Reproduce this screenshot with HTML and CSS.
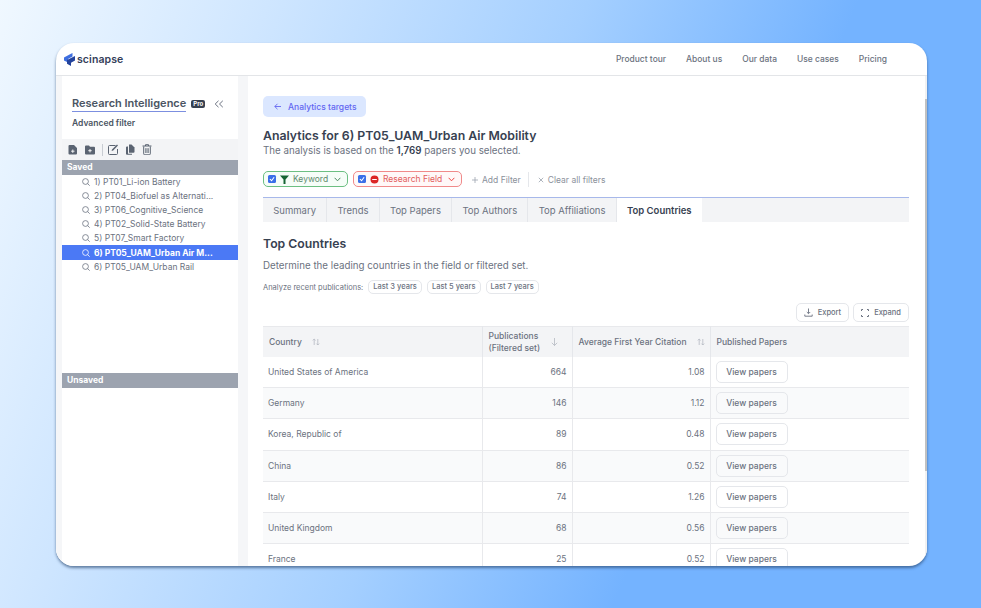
FILE: index.html
```html
<!DOCTYPE html>
<html lang="en">
<head>
<meta charset="utf-8">
<title>Scinapse</title>
<link rel="stylesheet" href="styles.css">
</head>
<body>
<div class="window">
  <header class="topbar">
    <div class="logo">
      <svg class="logo-mark" width="11" height="13" viewBox="0 0 11 13"><path d="M0 4.500 6.500 1 8.500 0V3.600L4 6V9.500L0 7.600Z" fill="#3f6fe0"/><path d="M3 7 11 3V7.500L7 9.700V13L3 10.800Z" fill="#24439c"/></svg>
      <span class="logo-text">scinapse</span>
    </div>
    <nav class="nav">
      <span>Product tour</span><span>About us</span><span>Our data</span><span>Use cases</span><span>Pricing</span>
    </nav>
  </header>
  <div class="body">
    <aside class="side">
      <div class="side-head">
        <div class="side-title-row">
          <span class="side-title">Research Intelligence</span>
          <span class="pro">Pro</span>
          <svg class="collapse" width="10" height="8" viewBox="0 0 10 8"><path d="M4.500 .8 1.200 4l3.300 3.200M8.800 .8 5.500 4l3.300 3.200" fill="none" stroke="#6b7280" stroke-width="1"/></svg>
        </div>
        <div class="adv">Advanced filter</div>
      </div>
      <div class="tools">
        <svg width="10" height="11" viewBox="0 0 10 11"><path d="M1.500 1h4.500L9 4V9.500a1 1 0 0 1-1 1H1.500a1 1 0 0 1-1-1V2a1 1 0 0 1 1-1Z" fill="#5b6472"/><path d="M4.800 5.500v3.400M3.100 7.200h3.400" stroke="#fff" stroke-width=".9"/></svg>
        <svg width="10" height="11" viewBox="0 0 10 11"><path d="M1 1.500h3l1 1.300h4a1 1 0 0 1 1 1V9.500a1 1 0 0 1-1 1H1a1 1 0 0 1-1-1V2.500a1 1 0 0 1 1-1Z" fill="#5b6472"/><path d="M5 5v3.400M3.300 6.700h3.400" stroke="#fff" stroke-width=".9"/></svg>
        <i class="tool-sep"></i>
        <svg width="10" height="11" viewBox="0 0 10 11"><path d="M7.500 1.500H1.500a1 1 0 0 0-1 1v7a1 1 0 0 0 1 1h7a1 1 0 0 0 1-1V5" fill="none" stroke="#5b6472"/><path d="M9 .4 10 1.400 5.200 6.600 3.600 7 4 5.400Z" fill="#5b6472"/></svg>
        <svg width="10" height="11" viewBox="0 0 10 11"><path d="M4 .5H6.500L9.500 3.500V7.800a1 1 0 0 1-1 1H4Z" fill="#5b6472"/><path d="M3 2.500V9.800H7V10.800H2a1 1 0 0 1-1-1V3.500a1 1 0 0 1 1-1Z" fill="#5b6472"/></svg>
        <svg width="10" height="11" viewBox="0 0 10 11"><path d="M.5 2h9M3.500 2V.7h3V2" fill="none" stroke="#5b6472"/><path d="M1.700 2.500v7.300a1 1 0 0 0 1 1h4.600a1 1 0 0 0 1-1V2.500" fill="none" stroke="#5b6472"/><path d="M3.700 4.200v4.800M5 4.200v4.800M6.300 4.200v4.800" stroke="#5b6472" stroke-width=".8"/></svg>
      </div>
      <div class="bar">Saved</div>
      <ul class="list">
        <li><svg class="q" viewBox="0 0 8 8"><circle cx="3.500" cy="3.500" r="2.900" fill="none" stroke="currentColor" stroke-width=".8"/><path d="M5.600 5.600 7.700 7.700" stroke="currentColor" stroke-width=".8"/></svg>1) PT01_Li-ion Battery</li>
        <li><svg class="q" viewBox="0 0 8 8"><circle cx="3.500" cy="3.500" r="2.900" fill="none" stroke="currentColor" stroke-width=".8"/><path d="M5.600 5.600 7.700 7.700" stroke="currentColor" stroke-width=".8"/></svg>2) PT04_Biofuel as Alternati...</li>
        <li><svg class="q" viewBox="0 0 8 8"><circle cx="3.500" cy="3.500" r="2.900" fill="none" stroke="currentColor" stroke-width=".8"/><path d="M5.600 5.600 7.700 7.700" stroke="currentColor" stroke-width=".8"/></svg>3) PT06_Cognitive_Science</li>
        <li><svg class="q" viewBox="0 0 8 8"><circle cx="3.500" cy="3.500" r="2.900" fill="none" stroke="currentColor" stroke-width=".8"/><path d="M5.600 5.600 7.700 7.700" stroke="currentColor" stroke-width=".8"/></svg>4) PT02_Solid-State Battery</li>
        <li><svg class="q" viewBox="0 0 8 8"><circle cx="3.500" cy="3.500" r="2.900" fill="none" stroke="currentColor" stroke-width=".8"/><path d="M5.600 5.600 7.700 7.700" stroke="currentColor" stroke-width=".8"/></svg>5) PT07_Smart Factory</li>
        <li class="sel"><svg class="q" viewBox="0 0 8 8"><circle cx="3.500" cy="3.500" r="2.900" fill="none" stroke="currentColor" stroke-width=".8"/><path d="M5.600 5.600 7.700 7.700" stroke="currentColor" stroke-width=".8"/></svg>6) PT05_UAM_Urban Air M...</li>
        <li><svg class="q" viewBox="0 0 8 8"><circle cx="3.500" cy="3.500" r="2.900" fill="none" stroke="currentColor" stroke-width=".8"/><path d="M5.600 5.600 7.700 7.700" stroke="currentColor" stroke-width=".8"/></svg>6) PT05_UAM_Urban Rail</li>
      </ul>
      <div class="bar">Unsaved</div>
    </aside>
    <main class="main">
      <button class="back"><svg width="7" height="7" viewBox="0 0 7 7"><path d="M3.500.8.800 3.500l2.700 2.700M.8 3.500H7" fill="none" stroke="#6366f1" stroke-width=".9"/></svg>Analytics targets</button>
      <h1 class="title">Analytics for 6) PT05_UAM_Urban Air Mobility</h1>
      <p class="sub">The analysis is based on the <b>1,769</b> papers you selected.</p>
      <div class="filters">
        <span class="chip green">
          <i class="check"><svg width="7" height="7" viewBox="0 0 7 7"><path d="M1 3.500 3 5.500 6 1.500" fill="none" stroke="#fff" stroke-width="1.200"/></svg></i>
          <svg width="9" height="9" viewBox="0 0 9 9"><path d="M0 .5h9L5.500 4.500V9h-2V4.500Z" fill="#166534"/></svg>
          Keyword
          <svg class="caret" width="7" height="5" viewBox="0 0 7 5"><path d="M.6.800 3.500 3.800 6.400.800" fill="none" stroke="#4d8a62"/></svg>
        </span>
        <span class="chip red">
          <i class="check"><svg width="7" height="7" viewBox="0 0 7 7"><path d="M1 3.500 3 5.500 6 1.500" fill="none" stroke="#fff" stroke-width="1.200"/></svg></i>
          <svg width="9" height="9" viewBox="0 0 9 9"><circle cx="4.500" cy="4.500" r="4" fill="#dc2626"/><path d="M2.200 4.500h4.600" stroke="#fff" stroke-width="1.200"/></svg>
          Research Field
          <svg class="caret" width="7" height="5" viewBox="0 0 7 5"><path d="M.6.800 3.500 3.800 6.400.800" fill="none" stroke="#ef4444"/></svg>
        </span>
        <span class="link add"><svg width="6" height="6" viewBox="0 0 6 6"><path d="M3 0v6M0 3h6" stroke="#9ca3af" stroke-width=".8"/></svg>Add Filter</span>
        <span class="link clear"><svg width="6" height="6" viewBox="0 0 6 6"><path d="M.8.800 5.200 5.200M5.200.800.800 5.200" stroke="#9ca3af" stroke-width=".8"/></svg>Clear all filters</span>
      </div>
      <div class="tabs">
        <span>Summary</span><span>Trends</span><span>Top Papers</span><span>Top Authors</span><span>Top Affiliations</span><span class="on">Top Countries</span>
      </div>
      <h2 class="sec">Top Countries</h2>
      <p class="desc">Determine the leading countries in the field or filtered set.</p>
      <div class="recent">
        <span class="recent-label">Analyze recent publications:</span>
        <span class="pill">Last 3 years</span><span class="pill">Last 5 years</span><span class="pill">Last 7 years</span>
      </div>
      <div class="actions">
        <span class="act"><svg width="9" height="9" viewBox="0 0 9 9"><path d="M4.500 .5v5M2.800 4l1.700 1.700L6.200 4M.8 6.500v1.700h7.400V6.500" fill="none" stroke="#6b7280" stroke-width=".9"/></svg>Export</span>
        <span class="act"><svg width="8" height="8" viewBox="0 0 8 8"><path d="M.5 2V.5H2M6 .5h1.500V2M7.500 6v1.500H6M2 7.500H.5V6" fill="none" stroke="#6b7280"/></svg>Expand</span>
      </div>
      <table class="tbl">
        <colgroup><col class="c1"><col class="c2"><col class="c3"><col class="c4"></colgroup>
        <thead>
          <tr>
            <th><div class="th"><span>Country</span><svg class="sort" width="8" height="8" viewBox="0 0 8 8"><path d="M2.200 7V1M.8 2.400 2.200 1l1.400 1.400M5.800 1v6M4.400 5.600 5.800 7l1.400-1.400" fill="none" stroke="#b4b9c2" stroke-width=".8"/></svg></div></th>
            <th><div class="th"><span>Publications<br>(Filtered set)</span><svg class="down" width="7" height="8" viewBox="0 0 7 8"><path d="M3.500 0v7.500M.8 4.800l2.700 2.700 2.700-2.700" fill="none" stroke="#b4b9c2" stroke-width=".8"/></svg></div></th>
            <th><div class="th"><span>Average First Year Citation</span><svg class="sort" width="8" height="8" viewBox="0 0 8 8"><path d="M2.200 7V1M.8 2.400 2.200 1l1.400 1.400M5.800 1v6M4.400 5.600 5.800 7l1.400-1.400" fill="none" stroke="#b4b9c2" stroke-width=".8"/></svg></div></th>
            <th><div class="th"><span>Published Papers</span></div></th>
          </tr>
        </thead>
        <tbody>
          <tr><td>United States of America</td><td class="num">664</td><td class="num">1.08</td><td><span class="view">View papers</span></td></tr>
          <tr><td>Germany</td><td class="num">146</td><td class="num">1.12</td><td><span class="view">View papers</span></td></tr>
          <tr><td>Korea, Republic of</td><td class="num">89</td><td class="num">0.48</td><td><span class="view">View papers</span></td></tr>
          <tr><td>China</td><td class="num">86</td><td class="num">0.52</td><td><span class="view">View papers</span></td></tr>
          <tr><td>Italy</td><td class="num">74</td><td class="num">1.26</td><td><span class="view">View papers</span></td></tr>
          <tr><td>United Kingdom</td><td class="num">68</td><td class="num">0.56</td><td><span class="view">View papers</span></td></tr>
          <tr><td>France</td><td class="num">25</td><td class="num">0.52</td><td><span class="view">View papers</span></td></tr>
        </tbody>
      </table>
    </main>
    <div class="scroll"><i></i></div>
  </div>
</div>
</body>
</html>
```
FILE: styles.css
```css
* { box-sizing: border-box; }
html, body { margin: 0; height: 100%; }
body {
  width: 981px;
  height: 608px;
  padding: 43px 54px 42px 56px;
  overflow: hidden;
  font-family: Inter, "Liberation Sans", sans-serif;
  background: linear-gradient(112deg, #f0f8ff 0%, #cfe6ff 22%, #a4cfff 48%, #74b3ff 70%, #74b3ff 100%);
}
.window {
  height: 523px;
  background: #fff;
  border-radius: 18px;
  overflow: hidden;
  display: flex;
  flex-direction: column;
  box-shadow: 0 2px 3px rgba(40, 70, 110, .65);
}
.topbar {
  height: 33px;
  flex: none;
  display: flex;
  align-items: center;
  justify-content: space-between;
  padding: 0 40px 0 8px;
  border-bottom: 1px solid #e3e5e8;
}
.logo { display: flex; align-items: center; gap: 2px; }
.logo-text { font-size: 10.500px; font-weight: 600; color: #34405a; letter-spacing: .1px; }
.nav { display: flex; gap: 20px; font-size: 8.450px; font-weight: 500; color: #6b7280; }
.body { flex: 1; min-height: 0; display: flex; }
.side {
  width: 182px;
  flex: none;
  margin-left: 0;
  border-left: 6px solid #f5f6f8;
  background: #fff;
  display: flex;
  flex-direction: column;
}
.side-head { height: 63px; padding: 20px 0 0 10px; }
.side-title-row { display: flex; align-items: center; height: 16px; }
.side-title { font-size: 11px; font-weight: 600; color: #4b5563; border-bottom: 1px solid #7c8fe0; line-height: 15px; }
.pro {
  margin-left: 5px;
  font-size: 6px;
  font-weight: 700;
  color: #fff;
  background: #374151;
  border-radius: 2px;
  padding: 1px 2px;
  line-height: 6px;
}
.collapse { margin-left: 9px; }
.adv { margin-top: 5px; font-size: 8.500px; font-weight: 600; color: #4b5563; line-height: 13px; }
.tools {
  height: 21px;
  background: #f3f4f6;
  display: flex;
  align-items: center;
  gap: 7px;
  padding-left: 6px;
}
.tool-sep { width: 1px; height: 12px; background: #c8ccd2; margin-right: -2px; }
.bar {
  height: 15px;
  background: #9ca3af;
  color: #fff;
  font-size: 8.500px;
  font-weight: 700;
  line-height: 15px;
  padding-left: 5px;
  flex: none;
}
.list { list-style: none; margin: 0; padding: 0; height: 198px; }
.list li {
  height: 14.100px;
  display: flex;
  align-items: center;
  padding-left: 20px;
  font-size: 8.500px;
  color: #6b7280;
  white-space: nowrap;
}
.list li.sel { background: #4b79f5; color: #fff; font-weight: 700; }
.q { width: 8px; height: 8px; margin-right: 4px; flex: none; }
.main {
  flex: 1;
  min-width: 0;
  border-left: 10px solid #f5f6f8;
  padding: 20px 16px 0 15px;
  overflow: hidden;
}
.scroll { width: 2px; flex: none; background: #f1f1f1; padding-top: 23px; }
.scroll i { display: block; width: 2px; height: 372px; background: #c1c1c1; }
.back {
  display: flex;
  align-items: center;
  gap: 7px;
  height: 21px;
  width: 103px;
  padding: 0 0 0 11px;
  border: 0;
  border-radius: 5px;
  background: #dbe7ff;
  color: #6366f1;
  font: 500 8.500px Inter, sans-serif;
}
.title { margin: 11px 0 0; font-size: 12.300px; line-height: 15px; font-weight: 600; color: #374151; }
.sub { margin: 1px 0 0; font-size: 9.750px; line-height: 14px; color: #6b7280; }
.sub b { font-weight: 600; color: #374151; }
.filters { display: flex; align-items: center; margin-top: 13px; height: 16px; font-size: 8.500px; }
.chip {
  display: flex;
  align-items: center;
  height: 16px;
  border-radius: 5px;
  border: 1px solid;
  padding: 0 4px;
  gap: 4px;
  margin-right: 5px;
  background: #fff;
}
.green { width: 85px; border-color: #6cbf82; color: #5f8a6d; background: #f6fdf8; }
.red { width: 109px; border-color: #f08a8a; color: #e25c5c; background: #fff8f8; }
.caret { margin-left: auto; margin-right: 2px; }
.check { width: 8px; height: 8px; border-radius: 1.500px; background: #3b6fe8; display: flex; align-items: center; justify-content: center; margin-left: 0; }
.check svg { width: 6px; height: 6px; }
.link { display: flex; align-items: center; gap: 4px; color: #8b919b; padding-top: 1px; }
.add { margin-left: 5px; padding-right: 7px; border-right: 1px solid #e5e7eb; height: 15px; }
.clear { margin-left: 9px; }
.tabs {
  display: flex;
  margin-top: 10px;
  height: 25px;
  border-top: 1px solid #a7b8ea;
  background: #f3f4f6;
  font-size: 9.500px;
  color: #6b7280;
}
.tabs span { display: flex; align-items: center; padding: 0 10.250px; border-right: 1px solid #e5e7eb; }
.tabs .on { background: #fff; font-weight: 600; color: #374151; border: 0; }
.sec { margin: 14px 0 0; font-size: 12.250px; line-height: 15px; font-weight: 600; color: #374151; }
.desc { margin: 8px 0 0; font-size: 9.750px; line-height: 14px; color: #6b7280; }
.recent { display: flex; align-items: center; margin-top: 7px; height: 14px; font-size: 7.500px; color: #6b7280; }
.recent-label { margin-right: 5px; }
.pill {
  height: 14px;
  border: 1px solid #e5e7eb;
  border-radius: 5px;
  padding: 0 4px;
  line-height: 12px;
  margin-right: 5px;
  font-weight: 500;
}
.actions { display: flex; justify-content: flex-end; gap: 4px; margin-top: 9px; height: 19px; }
.act {
  display: flex;
  align-items: center;
  gap: 5px;
  height: 19px;
  padding: 0 7px 0 7px;
  border: 1px solid #e5e7eb;
  border-radius: 5px;
  font-size: 7.500px;
  font-weight: 500;
  color: #6b7280;
}
.tbl {
  width: 646px;
  margin-top: 4px;
  border-collapse: collapse;
  table-layout: fixed;
  font-size: 8.500px;
  color: #6b7280;
}
.c1 { width: 219px; }
.c2 { width: 90px; }
.c3 { width: 138px; }
.c4 { width: 199px; }
.tbl th {
  height: 30px;
  padding: 0 5px 0 6px;
  background: #f3f4f6;
  border-top: 1px solid #e8e9ec;
  border-right: 1px solid #e5e7eb;
  text-align: left;
  font-weight: 500;
  line-height: 12px;
}
.tbl th:last-child, .tbl td:last-child { border-right: 0; }
.th { display: flex; align-items: center; gap: 10px; }
.down { margin-left: auto; margin-right: 9px; }
.tbl th:nth-child(3) .sort { margin-left: auto; }
.tbl td {
  height: 31.200px;
  padding: 0 5px;
  border-bottom: 1px solid #e8e9ec;
  border-right: 1px solid #e8e9ec;
}
.tbl tbody tr:nth-child(even) td { background: #f9fafb; }
.num { text-align: right; }
.view {
  display: block;
  width: 72px;
  height: 22px;
  line-height: 20px;
  text-align: center;
  border: 1px solid #e5e7eb;
  border-radius: 5px;
  font-weight: 500;
  color: #6b7280;
}
```
